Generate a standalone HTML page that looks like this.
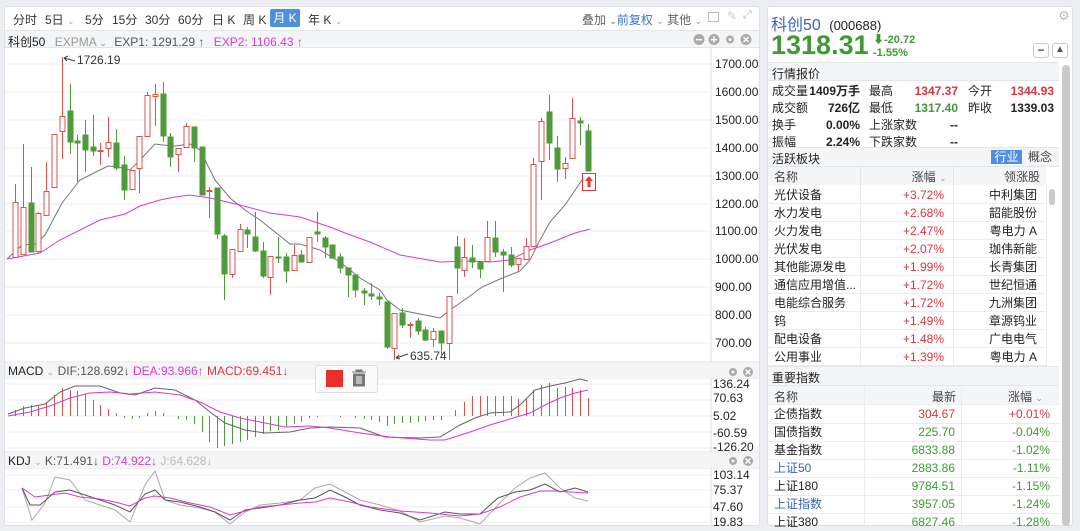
<!DOCTYPE html>
<html><head><meta charset="utf-8"><style>
*{margin:0;padding:0;box-sizing:border-box}
body{width:1080px;height:526px;overflow:hidden;background:#eceef1;font-family:"Liberation Sans","Noto Sans CJK SC",sans-serif;font-size:12px;color:#222;position:relative}
.a{position:absolute;white-space:nowrap}
.r{color:#d9363e}.g{color:#3f9a33}.b{color:#3a63b8}
.tb span{margin-right:0}
table{border-collapse:collapse}
</style></head><body>
<!-- left panel -->
<div class="a" style="left:4px;top:6px;width:756px;height:520px;background:#fff;border:1px solid #dde0e4;border-radius:3px"></div>
<div class="a" style="left:5px;top:30px;width:754px;height:18px;background:#f4f5f7;border-top:1px solid #e3e5e8;border-bottom:1px solid #e3e5e8"></div>
<div class="a" style="left:13px;top:11px;font-size:12px;color:#333;word-spacing:0">分时</div>
<div class="a" style="left:45px;top:11px;color:#333">5日 <span style="color:#aaa;font-size:9px">⌄</span></div>
<div class="a" style="left:85px;top:11px;color:#333">5分</div>
<div class="a" style="left:112px;top:11px;color:#333">15分</div>
<div class="a" style="left:145px;top:11px;color:#333">30分</div>
<div class="a" style="left:178px;top:11px;color:#333">60分</div>
<div class="a" style="left:212px;top:11px;color:#333">日 K</div>
<div class="a" style="left:243px;top:11px;color:#333">周 K</div>
<div class="a" style="left:270px;top:9px;width:30px;height:18px;background:#4f8fe0;border-radius:2px;color:#fff;text-align:center;line-height:18px">月 K</div>
<div class="a" style="left:308px;top:11px;color:#333">年 K <span style="color:#aaa;font-size:9px">⌄</span></div>
<div class="a" style="left:582px;top:11px;color:#666">叠加 <span style="font-size:9px">⌄</span><span style="color:#3a73c9">前复权</span> <span style="font-size:9px;color:#999">⌄</span> 其他 <span style="font-size:9px;color:#999">⌄</span></div>
<div class="a" style="left:708px;top:12px;width:11px;height:10px;border:1px solid #bbb"></div>
<div class="a" style="left:727px;top:9px;color:#ccc;font-size:12px">✎</div>
<div class="a" style="left:743px;top:9px;color:#bbb;font-size:11px">⤢</div>
<div class="a" style="left:8px;top:33px;color:#222">科创50 <span style="color:#999;margin-left:6px">EXPMA <span style="font-size:9px">⌄</span></span> <span style="color:#555;margin-left:4px">EXP1: 1291.29 ↑</span> <span style="color:#d63ad6;margin-left:6px">EXP2: 1106.43 ↑</span></div>
<svg class="a" style="left:693px;top:33px" width="62" height="13"><circle cx="6" cy="6.5" r="5.5" fill="#aaa"/><rect x="3" y="6" width="6" height="1.4" fill="#fff"/><circle cx="21" cy="6.5" r="5.5" fill="#aaa"/><rect x="18" y="6" width="6" height="1.4" fill="#fff"/><rect x="20.3" y="3.5" width="1.4" height="6" fill="#fff"/><circle cx="37" cy="6.5" r="4" fill="#aaa"/><circle cx="37" cy="6.5" r="1.5" fill="#fff"/><circle cx="53" cy="6.5" r="5.5" fill="#aaa"/><path d="M50.5 4l5 5M55.5 4l-5 5" stroke="#fff" stroke-width="1.4"/></svg>

<svg class="a" style="left:0;top:0" width="760" height="526">
<g stroke="#ececec" stroke-width="1">
<path d="M6 64H711M6 92H711M6 120H711M6 148H711M6 176H711M6 204H711M6 231H711M6 259H711M6 287H711M6 315H711M6 343H711"/>
<path d="M6 384H711M6 400H711M6 416H711M6 432H711M6 448H711M6 475H711M6 490H711M6 507H711M6 522H711"/>
</g>
<path d="M711 48V362M711 378V452M711 468V526" stroke="#ddd"/>
<path d="M5 362H759M5 378H759M5 452H759M5 468H759" stroke="#e0e0e0"/>
<rect x="5" y="363" width="754" height="15" fill="#f4f5f7"/><rect x="5" y="453" width="754" height="15" fill="#f4f5f7"/>
<g font-size="12" fill="#222" font-family="Liberation Sans">
<text x="715" y="68">1700.00</text><text x="715" y="96">1600.00</text><text x="715" y="124">1500.00</text><text x="715" y="152">1400.00</text><text x="715" y="180">1300.00</text><text x="715" y="208">1200.00</text><text x="715" y="235">1100.00</text><text x="715" y="263">1000.00</text><text x="715" y="291">900.00</text><text x="715" y="319">800.00</text><text x="715" y="347">700.00</text>
<text x="713" y="388">136.24</text><text x="713" y="402">70.63</text><text x="713" y="420">5.02</text><text x="713" y="437">-60.59</text><text x="713" y="451">-126.20</text>
<text x="713" y="479">103.14</text><text x="713" y="494">75.37</text><text x="713" y="511">47.60</text><text x="713" y="526">19.83</text>
<text x="77" y="64" fill="#333">1726.19</text><text x="410" y="360" fill="#333">635.74</text>
</g>
<path d="M64 58L75 61M64 58l4-2M64 58l3 3" stroke="#444" fill="none"/>
<path d="M396 358L408 354M396 358l3-3M396 358l4 1" stroke="#444" fill="none"/>
<!-- EMA lines -->
<polyline fill="none" stroke="#777" stroke-width="1" points="7,259 22,245 35,244 45,235 62,203 80,180 100,170 108,166 118,167 130,170 140,160 155,144 163,145 175,146 190,144 200,150 215,180 230,198 245,210 260,220 270,228 290,244 300,244 320,250 340,262 360,278 380,290 387,300 400,310 440,318 450,310 470,296 482,287 500,279 520,271 530,260 540,240 550,222 565,205 582,180 590,178"/>
<polyline fill="none" stroke="#d63ad6" stroke-width="1" points="7,259 40,253 60,240 100,220 125,214 140,206 160,200 175,197 190,195 210,198 240,205 270,213 300,217 330,227 345,233 370,242 400,255 440,262 470,261 490,262 510,260 530,250 550,243 575,233 590,229"/>
<!-- red candles -->
<g stroke="#d9534f" fill="#fff" stroke-width="1">
<path d="M15.5 184V258M23.5 144V255M38.5 212V253M46.5 162V216M54.5 134V188M62.5 57V159M100.5 143V165M108.5 117V157M132.5 170V190M139.5 136V193M147.5 92V137M155.5 84V126M178.5 148V172M186.5 123V148M209.5 187V218M232.5 249V278M240.5 224V252M270.5 256V295M294.5 245V271M309.5 237V263M394.5 313V360M410.5 322V338M433.5 328V347M449.5 296V360M464.5 238V277M487.5 221V262M518.5 258V272M526.5 238V260M533.5 158V247M541.5 118V200M565.5 157V179M572.5 98V159"/>
<rect x="13" y="202.5" width="5" height="55"/><rect x="21" y="207.5" width="5" height="47"/><rect x="36" y="213.5" width="5" height="38"/><rect x="44" y="191.5" width="5" height="24"/><rect x="52" y="134.5" width="5" height="53"/><rect x="60" y="116.5" width="5" height="15"/><rect x="98" y="150.5" width="5" height="1"/><rect x="106" y="142.5" width="5" height="6"/><rect x="130" y="170.5" width="5" height="19"/><rect x="137" y="136.5" width="5" height="32"/><rect x="145" y="95.5" width="5" height="41"/><rect x="153" y="94.5" width="5" height="2"/><rect x="176" y="148.5" width="5" height="6"/><rect x="184" y="126.5" width="5" height="21"/><rect x="207" y="190.5" width="5" height="1"/><rect x="230" y="249.5" width="5" height="25"/><rect x="238" y="229.5" width="5" height="22"/><rect x="268" y="256.5" width="5" height="21"/><rect x="292" y="255.5" width="5" height="15"/><rect x="307" y="237.5" width="5" height="25"/><rect x="392" y="313.5" width="5" height="35"/><rect x="408" y="324.5" width="5" height="1"/><rect x="431" y="331.5" width="5" height="8"/><rect x="447" y="296.5" width="5" height="47"/><rect x="462" y="257.5" width="5" height="13"/><rect x="485" y="237.5" width="5" height="24"/><rect x="516" y="258.5" width="5" height="6"/><rect x="524" y="246.5" width="5" height="13"/><rect x="531" y="164.5" width="5" height="82"/><rect x="539" y="121.5" width="5" height="40"/><rect x="563" y="163.5" width="5" height="5"/><rect x="570" y="118.5" width="5" height="40"/>
</g>
<!-- green candles -->
<g stroke="#4f9a3a" fill="#4f9a3a" stroke-width="1">
<path d="M31.5 167V252M70.5 84V154M77.5 135V182M85.5 120V172M93.5 115V156M116.5 129V170M124.5 156V200M163.5 82V142M170.5 133V167M194.5 127V162M202.5 147V195M217.5 188V239M224.5 234V300M247.5 227V248M255.5 212V252M263.5 242V278M278.5 237V263M286.5 253V283M301.5 250V262M317.5 212V242M325.5 236V258M332.5 245V258M340.5 253V273M348.5 268V297M355.5 275V297M364.5 288V305M371.5 283V300M379.5 293V305M387.5 302V349M402.5 308V328M418.5 318V335M425.5 327V341M441.5 331V357M457.5 236V294M472.5 245V268M480.5 262V278M495.5 221V257M503.5 249V292M511.5 247V267M549.5 95V160M557.5 136V182M580.5 117V145M588.5 124V171"/>
<rect x="29" y="203" width="5" height="49"/><rect x="68" y="111" width="5" height="31"/><rect x="75" y="141" width="5" height="2"/><rect x="83" y="135" width="5" height="15"/><rect x="91" y="147" width="5" height="4"/><rect x="114" y="143" width="5" height="25"/><rect x="122" y="165" width="5" height="25"/><rect x="161" y="94" width="5" height="42"/><rect x="168" y="137" width="5" height="20"/><rect x="192" y="127" width="5" height="21"/><rect x="200" y="147" width="5" height="48"/><rect x="215" y="188" width="5" height="46"/><rect x="222" y="236" width="5" height="38"/><rect x="245" y="230" width="5" height="4"/><rect x="253" y="237" width="5" height="14"/><rect x="261" y="251" width="5" height="25"/><rect x="276" y="257" width="5" height="1"/><rect x="284" y="257" width="5" height="14"/><rect x="299" y="255" width="5" height="7"/><rect x="315" y="232" width="5" height="2"/><rect x="323" y="238" width="5" height="9"/><rect x="330" y="245" width="5" height="13"/><rect x="338" y="257" width="5" height="11"/><rect x="346" y="268" width="5" height="7"/><rect x="353" y="275" width="5" height="15"/><rect x="362" y="291" width="5" height="2"/><rect x="369" y="294" width="5" height="2"/><rect x="377" y="297" width="5" height="2"/><rect x="385" y="302" width="5" height="45"/><rect x="400" y="313" width="5" height="12"/><rect x="416" y="321" width="5" height="10"/><rect x="423" y="330" width="5" height="10"/><rect x="439" y="331" width="5" height="12"/><rect x="455" y="247" width="5" height="21"/><rect x="470" y="258" width="5" height="4"/><rect x="478" y="262" width="5" height="7"/><rect x="493" y="238" width="5" height="14"/><rect x="501" y="252" width="5" height="3"/><rect x="509" y="255" width="5" height="10"/><rect x="547" y="112" width="5" height="31"/><rect x="555" y="148" width="5" height="21"/><rect x="578" y="121" width="5" height="2"/><rect x="586" y="131" width="5" height="40"/>
</g>
<rect x="582.5" y="173.5" width="13" height="17" fill="#fff" stroke="#d9363e"/>
<path d="M589 176l-4 5h2.5v6h3v-6h2.5z" fill="#e53a2a"/>
<!-- MACD -->
<text x="8" y="375" font-size="12" fill="#222" font-family="Liberation Sans">MACD <tspan fill="#aaa" font-size="9">⌄</tspan> <tspan fill="#555">DIF:128.692↓</tspan>   <tspan fill="#d63ad6">DEA:93.966↑</tspan>   <tspan fill="#d9363e">MACD:69.451↓</tspan></text>
<g stroke="#d9534f" stroke-width="1"><path d="M15.5 416V410M23.5 416V406M31.5 416V405M38.5 416V406M46.5 416V403M54.5 416V395M62.5 416V388M70.5 416V390M77.5 416V391M85.5 416V394M93.5 416V400M100.5 416V405M108.5 416V409M116.5 416V413M147.5 416V413M155.5 416V411M163.5 416V413M455.5 416V410M464.5 416V402M472.5 416V396M480.5 416V396M487.5 416V396M495.5 416V396M503.5 416V396M511.5 416V396M518.5 416V399M526.5 416V399M533.5 416V390M541.5 416V385M549.5 416V383M557.5 416V388M565.5 416V387M572.5 416V388M580.5 416V390M588.5 416V398"/></g>
<g stroke="#4f9a3a" stroke-width="1"><path d="M124.5 416V418M132.5 416V419M139.5 416V418M178.5 416V419M186.5 416V420M194.5 416V424M202.5 416V432M209.5 416V442M217.5 416V448M224.5 416V446M232.5 416V444M240.5 416V442M247.5 416V440M255.5 416V437M263.5 416V434M270.5 416V431M278.5 416V430M286.5 416V427M294.5 416V424M301.5 416V422M309.5 416V418M317.5 416V417M340.5 416V417M355.5 416V418M364.5 416V419M371.5 416V420M379.5 416V422M387.5 416V426M394.5 416V424M402.5 416V423M410.5 416V423M418.5 416V422M425.5 416V421M433.5 416V420M441.5 416V420"/></g>
<polyline fill="none" stroke="#666" points="8,414 25,408 45,404 60,392 75,386 100,386 120,393 135,395 155,388 175,390 195,400 210,412 225,423 245,430 265,433 290,432 310,428 330,427 360,428 385,437 420,438 440,437 460,425 475,418 490,413 510,412 520,405 535,390 550,386 565,383 580,379 588,381"/>
<polyline fill="none" stroke="#d63ad6" points="8,416 30,412 50,406 70,398 90,393 110,392 130,394 155,392 180,395 200,402 220,412 240,418 260,422 285,427 310,426 330,428 360,433 390,437 430,440 445,440 470,432 490,425 510,419 530,413 545,405 560,398 575,393 588,390"/>
<!-- KDJ -->
<text x="8" y="465" font-size="12" fill="#222" font-family="Liberation Sans">KDJ <tspan fill="#aaa" font-size="9">⌄</tspan> <tspan fill="#555">K:71.491↓</tspan>   <tspan fill="#d63ad6">D:74.922↓</tspan>   <tspan fill="#bbb">J:64.628↓</tspan></text>
<polyline fill="none" stroke="#aaa" points="22,488 32,520 45,503 55,477 70,480 85,500 100,505 115,510 130,522 145,485 155,471 165,500 180,505 200,508 215,512 230,524 245,512 260,505 280,503 300,500 315,488 330,484 345,492 360,500 380,505 400,511 420,522 445,516 460,518 480,524 498,505 515,488 530,478 545,473 560,488 575,498 588,501"/>
<polyline fill="none" stroke="#555" points="22,488 30,505 40,505 55,492 70,490 85,495 100,500 115,505 130,512 145,494 155,490 165,500 180,502 200,507 215,512 230,520 245,510 260,508 280,505 300,500 315,498 330,490 345,497 360,505 380,510 400,513 420,520 445,512 460,514 480,514 498,498 515,492 530,490 545,484 560,492 575,488 588,492"/>
<polyline fill="none" stroke="#d63ad6" points="22,488 35,497 50,495 65,493 80,497 100,499 115,502 130,506 145,498 155,496 170,498 190,503 210,507 230,515 245,511 260,507 280,505 300,503 315,502 330,498 350,502 370,507 400,511 430,513 460,516 480,514 500,507 520,497 540,491 555,491 570,492 588,493"/>
<g><circle cx="733" cy="372" r="4" fill="#aaa"/><circle cx="733" cy="372" r="1.5" fill="#f4f5f7"/><circle cx="748" cy="372" r="5" fill="#aaa"/><path d="M745.5 369.5l5 5M750.5 369.5l-5 5" stroke="#fff" stroke-width="1.4"/>
<circle cx="733" cy="461" r="4" fill="#aaa"/><circle cx="733" cy="461" r="1.5" fill="#f4f5f7"/><circle cx="748" cy="461" r="5" fill="#aaa"/><path d="M745.5 458.5l5 5M750.5 458.5l-5 5" stroke="#fff" stroke-width="1.4"/></g>
<!-- popup -->
<rect x="315.5" y="365.5" width="62" height="27" rx="2" fill="#fafafa" stroke="#ddd"/>
<rect x="326" y="370" width="17" height="17" fill="#e8302a"/>
<path d="M352 372h14M356 372v-2h6v2M353.5 374h11v12h-11z" stroke="#777" fill="#777" stroke-width="1"/>
<path d="M357 376v8M359 376v8M361 376v8" stroke="#fafafa"/>
</svg>

<!-- right panel -->
<div class="a" style="left:767px;top:6px;width:306px;height:520px;background:#fff;border:1px solid #dde0e4;border-radius:3px"></div>
<div class="a b" style="left:771px;top:11px;font-size:16px">科创50 <span style="color:#222;font-size:13px;margin-left:4px">(000688)</span></div>
<div class="a" style="left:1058px;top:8px;color:#bbb;font-size:13px">⚙</div>
<div class="a g" style="left:771px;top:30px;font-size:27px;font-weight:bold">1318.31</div>
<div class="a g" style="left:873px;top:31px;font-size:11px;font-weight:bold">⬇-20.72</div>
<div class="a g" style="left:873px;top:47px;font-size:11px;font-weight:bold">-1.55%</div>
<div class="a" style="left:1033px;top:43px;width:16px;height:15px;border:1px solid #ccc;border-radius:3px;text-align:center;line-height:12px;font-weight:bold;color:#555">−</div>
<div class="a" style="left:1052px;top:43px;width:16px;height:15px;border:1px solid #ccc;border-radius:3px;text-align:center;line-height:12px;color:#555;font-size:10px">▲</div>
<div class="a" style="left:768px;top:62px;width:291px;height:19px;background:#f4f5f7;border-top:1px solid #e3e5e8;border-bottom:1px solid #e3e5e8;padding:2px 4px">行情报价</div>
<div class="a" style="left:1062px;top:65px;width:8px;height:461px;background:#c9cacc;border-radius:4px"></div>
<div class="a" style="left:772px;top:83px;line-height:17px">成交量<br>成交额<br>换手<br>振幅</div>
<div class="a" style="left:806px;top:83px;width:54px;line-height:17px;text-align:right;font-weight:bold">1409万手<br>726亿<br>0.00%<br>2.24%</div>
<div class="a" style="left:869px;top:83px;line-height:17px">最高<br>最低<br>上涨家数<br>下跌家数</div>
<div class="a" style="left:900px;top:83px;width:58px;line-height:17px;text-align:right;font-weight:bold"><span class="r">1347.37</span><br><span class="g">1317.40</span><br>--<br>--</div>
<div class="a" style="left:968px;top:83px;line-height:17px">今开<br>昨收</div>
<div class="a" style="left:990px;top:83px;width:64px;line-height:17px;text-align:right;font-weight:bold"><span class="r">1344.93</span><br>1339.03</div>
<div class="a" style="left:768px;top:147px;width:291px;height:20px;background:#f4f5f7;border-top:1px solid #e3e5e8;border-bottom:1px solid #e3e5e8;padding:2px 4px">活跃板块</div>
<div class="a" style="left:991px;top:150px;width:31px;height:14px;background:#4f8fe0;color:#fff;text-align:center;line-height:14px">行业</div>
<div class="a" style="left:1028px;top:150px;line-height:14px;color:#444">概念</div>
<table class="a" style="left:768px;top:167px;width:278px;font-size:12px">
<tr style="height:18px;background:#f4f5f7;color:#444"><td style="padding-left:6px;width:92px;border-right:1px solid #e3e5e8">名称</td><td style="text-align:right;width:93px;padding-right:6px;border-right:1px solid #e3e5e8">涨幅 <span style="color:#999;font-size:9px">⌄</span></td><td style="text-align:right;padding-right:6px">领涨股</td></tr>
</table>
<div class="a" style="left:768px;top:185px;width:278px;line-height:18px">
<div style="display:flex;flex-direction:column">
</div></div>
<div class="a" style="left:774px;top:186px;line-height:18px">光伏设备<br>水力发电<br>火力发电<br>光伏发电<br>其他能源发电<br>通信应用增值...<br>电能综合服务<br>钨<br>配电设备<br>公用事业</div>
<div class="a r" style="left:870px;top:186px;width:74px;line-height:18px;text-align:right">+3.72%<br>+2.68%<br>+2.47%<br>+2.07%<br>+1.99%<br>+1.72%<br>+1.72%<br>+1.49%<br>+1.48%<br>+1.39%</div>
<div class="a" style="left:960px;top:186px;width:77px;line-height:18px;text-align:right">中利集团<br>韶能股份<br>粤电力 A<br>珈伟新能<br>长青集团<br>世纪恒通<br>九洲集团<br>章源钨业<br>广电电气<br>粤电力 A</div>
<svg class="a" style="left:768px;top:185px" width="292" height="181"><g stroke="#ececec"><path d="M0 18.5H278M0 36.5H278M0 54.5H278M0 72.5H278M0 90.5H278M0 108.5H278M0 126.5H278M0 144.5H278M0 162.5H278M0 180.5H278M92.5 0V181M185.5 0V181M278.5 0V181"/></g><rect x="281" y="4" width="6" height="16" rx="3" fill="#c9cacc"/></svg>
<div class="a" style="left:768px;top:366px;width:291px;height:20px;background:#f4f5f7;border-top:1px solid #e3e5e8;border-bottom:1px solid #e3e5e8;padding:2px 4px">重要指数</div>
<div class="a" style="left:768px;top:386px;width:291px;height:19px;background:#f4f5f7;color:#444"></div>
<div class="a" style="left:774px;top:388px;color:#444">名称</div>
<div class="a" style="left:932px;top:388px;color:#444">最新</div>
<div class="a" style="left:1008px;top:388px;color:#444">涨幅 <span style="color:#999;font-size:9px">⌄</span></div>
<div class="a" style="left:774px;top:405px;line-height:18px">企债指数<br>国债指数<br>基金指数<br><span class="b">上证50</span><br>上证180<br><span class="b">上证指数</span><br>上证380</div>
<div class="a" style="left:880px;top:405px;width:75px;line-height:18px;text-align:right"><span class="r">304.67</span><br><span class="g">225.70<br>6833.88<br>2883.86<br>9784.51<br>3957.05<br>6827.46</span></div>
<div class="a" style="left:975px;top:405px;width:75px;line-height:18px;text-align:right"><span class="r">+0.01%</span><br><span class="g">-0.04%<br>-1.02%<br>-1.11%<br>-1.15%<br>-1.24%<br>-1.28%</span></div>
<svg class="a" style="left:768px;top:386px" width="292" height="140"><g stroke="#ececec"><path d="M0 18.5H291M0 37.5H291M0 55.5H291M0 73.5H291M0 91.5H291M0 109.5H291M0 127.5H291M96.5 0V140M193.5 0V140"/></g></svg>
</body></html>
